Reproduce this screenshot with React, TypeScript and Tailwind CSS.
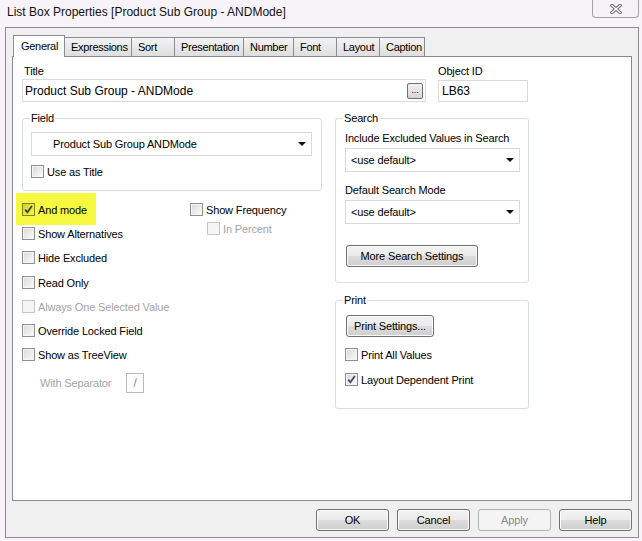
import clsx from "clsx";

function Box({ checked, disabled, yellow }: { checked?: boolean; disabled?: boolean; yellow?: boolean }) {
  return (
    <span
      className={clsx(
        "flex h-[13px] w-[13px] shrink-0 items-center justify-center border",
        disabled
          ? "border-[#c6c6c6] bg-[#f5f5f5]"
          : yellow
            ? "border-[#80821f] bg-[linear-gradient(135deg,#cfd23a,#f3f64c)]"
            : "border-[#8e8f8f] bg-[linear-gradient(135deg,#d8d8d8,#fbfbfb)] shadow-[inset_0_0_0_1px_#f4f4f4]"
      )}
    >
      {checked && (
        <svg width="9" height="9" viewBox="0 0 9 9">
          <path
            d="M1.2 4.6 L3.4 7.3 L7.9 0.9"
            fill="none"
            stroke={yellow ? "#3f4216" : "#3d4b78"}
            strokeWidth="1.7"
          />
        </svg>
      )}
    </span>
  );
}

function Check({
  label,
  checked,
  disabled,
  yellow,
  className,
}: {
  label: string;
  checked?: boolean;
  disabled?: boolean;
  yellow?: boolean;
  className?: string;
}) {
  return (
    <div className={clsx("flex h-[13px] items-center gap-[3px]", className)}>
      <Box checked={checked} disabled={disabled} yellow={yellow} />
      <span className={clsx("whitespace-nowrap leading-[14px]", disabled ? "text-[#a3a3a3]" : "text-black")}>{label}</span>
    </div>
  );
}

function Group({ label, className, children }: { label: string; className?: string; children: React.ReactNode }) {
  return (
    <div className={clsx("relative flex flex-col rounded-[3px] border border-[#d5dfe5]", className)}>
      <span className="absolute -top-[8px] left-[7px] bg-white px-[1px] leading-[14px]">{label}</span>
      {children}
    </div>
  );
}

function Select({ value, className }: { value: string; className?: string }) {
  return (
    <div className={clsx("flex h-[24px] items-center justify-between border border-[#d9d9d9] bg-white pr-[5px]", className)}>
      <span className="whitespace-nowrap">{value}</span>
      <svg width="8" height="4" viewBox="0 0 8 4">
        <path d="M0 0h8L4 4z" fill="#111" />
      </svg>
    </div>
  );
}

function Btn({ children, disabled, className }: { children: React.ReactNode; disabled?: boolean; className?: string }) {
  return (
    <div
      className={clsx(
        "flex h-[22px] shrink-0 items-center justify-center rounded-[3px] border",
        disabled
          ? "border-[#adb2b5] bg-[#f4f4f4] text-[#8a8a8a]"
          : "border-[#707070] bg-[linear-gradient(#f2f2f2_0%,#ebebeb_50%,#dddddd_50%,#cfcfcf_100%)] text-black shadow-[inset_0_0_0_1px_#fbfbfb]",
        className
      )}
    >
      {children}
    </div>
  );
}

const tabs = [
  { label: "Expressions", w: "w-[68px]" },
  { label: "Sort", w: "w-[44px]" },
  { label: "Presentation", w: "w-[70px]" },
  { label: "Number", w: "w-[51px]" },
  { label: "Font", w: "w-[44px]" },
  { label: "Layout", w: "w-[44px]" },
  { label: "Caption", w: "w-[46px]" },
];

export default function App() {
  return (
    <div className="flex h-[541px] w-[642px] flex-col overflow-hidden bg-[#f8f3f8] font-['Liberation_Sans',Arial,sans-serif] text-[11px] tracking-[-0.15px] text-black">
      {/* title bar */}
      <div className="flex h-[27px] shrink-0 items-start justify-between">
        <span className="pl-[7px] pt-[5px] text-[12px] leading-[14px] tracking-normal text-[#111]">
          List Box Properties [Product Sub Group - ANDMode]
        </span>
        <div className="mr-[3px] flex h-[18px] w-[47px] items-center justify-center rounded-b-[4px] border border-t-0 border-[#a4a0a6] bg-[#f5f1f5]">
          <svg width="12" height="10" viewBox="0 0 12 10">
            <path d="M2 1.5 L10 8.5 M10 1.5 L2 8.5" stroke="#707070" strokeWidth="3.4" strokeLinecap="square" />
            <path d="M2 1.5 L10 8.5 M10 1.5 L2 8.5" stroke="#ffffff" strokeWidth="1.4" strokeLinecap="square" />
          </svg>
        </div>
      </div>

      {/* dialog frame */}
      <div className="mb-[3px] ml-[5px] mr-[3px] flex flex-1 flex-col border border-[#8b8b8b] bg-[#f0f0f0] pl-[6px] pt-[7px]">
        <div className="flex w-[620px] flex-col">
          {/* tabs */}
          <div className="relative z-10 flex h-[21px] items-end pl-[1px]">
            <div className="relative z-10 -mb-[1px] flex h-[22px] w-[52px] items-start border border-b-0 border-[#898c95] bg-white pl-[7px] pt-[3px] leading-[14px] tracking-[-0.3px]">
              General
            </div>
            {tabs.map((t) => (
              <div
                key={t.label}
                className={clsx(
                  "-ml-[1px] flex h-[19px] items-center border border-b-0 border-[#898c95] bg-[linear-gradient(#f3f3f3,#dedede)] pl-[6px] leading-[14px] tracking-[-0.3px]",
                  t.w
                )}
              >
                {t.label}
              </div>
            ))}
          </div>

          {/* tab panel */}
          <div className="flex h-[445px] flex-col border border-[#898c95] bg-white pl-[9px] pt-[7px]">
            <div className="flex">
              <div className="flex w-[404px] flex-col">
                <span className="pl-[2px] leading-[14px]">Title</span>
                <div className="mt-[1px] flex h-[23px] items-center justify-between border border-[#dadada] pl-[2px] pr-[2px]">
                  <span className="text-[12px] tracking-normal">Product Sub Group - ANDMode</span>
                  <div className="flex h-[16px] w-[16px] items-end justify-center rounded-[2px] border border-[#707070] bg-[linear-gradient(#f2f2f2,#d4d4d4)] pb-[3px] text-[9px] leading-[9px]">
                    ...
                  </div>
                </div>
              </div>
              <div className="ml-[12px] flex w-[90px] flex-col">
                <span className="leading-[14px]">Object ID</span>
                <div className="mt-[2px] flex h-[22px] items-center border border-[#dadada] pl-[3px] text-[12px] tracking-normal">
                  LB63
                </div>
              </div>
            </div>

            <div className="mt-[16px] flex">
              {/* left column */}
              <div className="flex w-[300px] flex-col">
                <Group label="Field" className="h-[73px] pl-[8px] pt-[13px]">
                  <Select value="Product Sub Group ANDMode" className="w-[281px] pl-[21px]" />
                  <Check label="Use as Title" className="mt-[9px]" />
                </Group>

                <div className="flex">
                  <div className="flex w-[168px] flex-col">
                    <div className="-ml-[6px] mt-[2px] h-[32px] w-[80px] bg-[#f7f940] pl-[6px] pt-[10px]">
                      <Check label="And mode" checked yellow />
                    </div>
                    <Check label="Show Alternatives" className="mt-[2px]" />
                    <Check label="Hide Excluded" className="mt-[11px]" />
                    <Check label="Read Only" className="mt-[12px]" />
                    <Check label="Always One Selected Value" disabled className="mt-[11px]" />
                    <Check label="Override Locked Field" className="mt-[11px]" />
                    <Check label="Show as TreeView" className="mt-[11px]" />
                    <div className="mt-[12px] flex h-[20px] items-center pl-[18px]">
                      <span className="w-[86px] leading-[14px] text-[#a3a3a3]">With Separator</span>
                      <div className="flex h-[20px] w-[18px] items-center justify-center border border-[#b9b9b9] text-[12px] text-[#8a8a8a]">
                        /
                      </div>
                    </div>
                  </div>
                  <div className="flex flex-col">
                    <Check label="Show Frequency" className="mt-[12px]" />
                    <Check label="In Percent" disabled className="ml-[17px] mt-[6px]" />
                  </div>
                </div>
              </div>

              {/* right column */}
              <div className="ml-[13px] flex w-[194px] flex-col">
                <Group label="Search" className="h-[165px] pl-[9px] pt-[12px]">
                  <span className="leading-[14px]">Include Excluded Values in Search</span>
                  <Select value="<use default>" className="mt-[3px] w-[175px] pl-[5px]" />
                  <span className="mt-[11px] leading-[14px]">Default Search Mode</span>
                  <Select value="<use default>" className="mt-[3px] w-[175px] pl-[5px]" />
                  <Btn className="ml-[1px] mt-[21px] w-[132px]">More Search Settings</Btn>
                </Group>
                <Group label="Print" className="mt-[17px] h-[109px] pl-[9px] pt-[14px]">
                  <Btn className="ml-[1px] w-[88px]">Print Settings...</Btn>
                  <Check label="Print All Values" className="mt-[11px]" />
                  <Check label="Layout Dependent Print" checked className="mt-[12px]" />
                </Group>
              </div>
            </div>
          </div>

          {/* dialog buttons */}
          <div className="mt-[8px] flex justify-end gap-[8px]">
            <Btn className="w-[73px]">OK</Btn>
            <Btn className="w-[73px]">Cancel</Btn>
            <Btn disabled className="w-[73px]">
              Apply
            </Btn>
            <Btn className="w-[73px]">Help</Btn>
          </div>
        </div>
      </div>
    </div>
  );
}
